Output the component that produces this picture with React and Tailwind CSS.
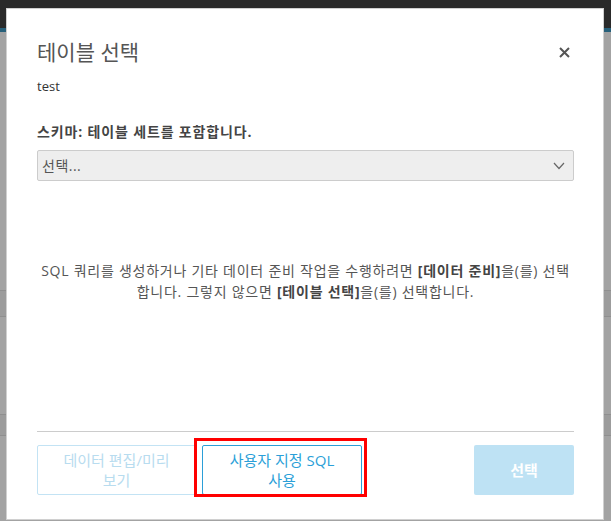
import React from 'react';

const FONT = { fontFamily: '"Open Sans", "Noto Sans CJK KR", sans-serif' };

const App = () => {
  return (
    <div className="relative w-[611px] h-[521px] overflow-hidden bg-[#a3a3a3]" style={FONT}>
      {/* page behind the overlay */}
      <div className="h-[28px] bg-[#2a2a2a]" />
      <div className="h-[4px] bg-[#27607a]" />
      <div className="h-[258px]" />
      <div className="h-[27px] border-y border-[#8f8f8f] bg-[#9c9c9c]" />
      <div className="h-[97px]" />
      <div className="h-[22px] border-y border-[#8f8f8f] bg-[#9c9c9c]" />

      {/* modal */}
      <div className="absolute left-[6px] top-[8px] w-[598px] h-[512px] bg-white border border-[#d0d0d0] pl-[30px] pr-[29px] pt-[28px]">
        <div className="flex items-center justify-between">
          <h2 className="text-[21px] leading-[30px] text-[#555] font-normal">테이블 선택</h2>
          <button className="mr-[4px] text-[#555]">
            <svg width="11" height="11" viewBox="0 0 11 11">
              <path d="M1 1L10 10M10 1L1 10" stroke="#555" strokeWidth="2" />
            </svg>
          </button>
        </div>
        <div className="mt-[10px] text-[13px] leading-[18px] text-[#333]">test</div>

        <div className="mt-[28px] text-[14px] leading-[18px] tracking-[0.85px] font-bold text-[#444]">스키마: 테이블 세트를 포함합니다.</div>
        <div className="mt-[9px] h-[31px] flex items-center justify-between bg-[#eeeeee] border border-[#cccccc] rounded-[2px] pl-[4px] pr-[8px]">
          <span className="text-[14px] tracking-[0.5px] text-[#555]">선택...</span>
          <svg width="12" height="8" viewBox="0 0 12 8">
            <path d="M1 1L6 6.5L11 1" stroke="#666" strokeWidth="1.2" fill="none" />
          </svg>
        </div>

        <p className="mt-[79px] text-center text-[14px] leading-[21px] tracking-[0.75px] text-[#555]">
          SQL 쿼리를 생성하거나 기타 데이터 준비 작업을 수행하려면 <b className="text-[#444]">[데이터 준비]</b>을(를) 선택
          <br />
          합니다. 그렇지 않으면 <b className="text-[#444]">[테이블 선택]</b>을(를) 선택합니다.
        </p>

        <div className="mt-[129px] h-px bg-[#cccccc]" />

        <div className="mt-[13px] flex items-center justify-between">
          <div className="flex items-center gap-[6px]">
            <button className="w-[159px] h-[50px] border border-[#c3e3f4] rounded-[2px] text-[15px] leading-[20px] text-[#b8dcef] px-2">
              데이터 편집/미리
              <br />
              보기
            </button>
            <div className="relative">
              <button className="w-[160px] h-[50px] border border-[#2b9fd8] rounded-[2px] text-[15px] leading-[20px] text-[#2b9fd8] px-2">
                사용자 지정 SQL
                <br />
                사용
              </button>
              <div className="absolute -left-[8px] -right-[5px] -top-[7px] -bottom-[2px] border-[3px] border-[#ff0000] pointer-events-none" />
            </div>
          </div>
          <button className="w-[100px] h-[50px] rounded-[2px] bg-[#bee2f4] text-white font-bold text-[15px]">선택</button>
        </div>
      </div>
    </div>
  );
};

export default App;
